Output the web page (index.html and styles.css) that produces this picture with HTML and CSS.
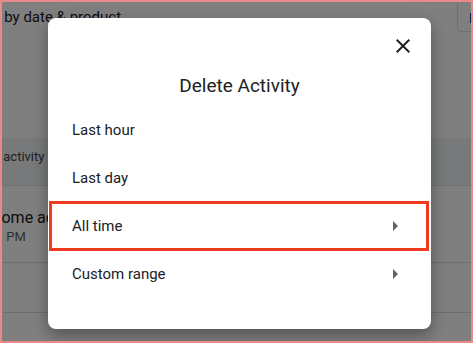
FILE: index.html
```html
<!DOCTYPE html>
<html lang="en">
<head>
  <meta charset="UTF-8">
  <meta name="viewport" content="width=device-width, initial-scale=1.0">
  <title>Delete Activity</title>
  <link rel="stylesheet" href="styles.css">
</head>
<body>
  <div class="frame">
    <!-- Page behind the dialog -->
    <div class="page">
      <div class="toolbar">
        <div class="filter-text">Filter by date &amp; product</div>
        <div class="toolbar-button"><span class="toolbar-mark"></span></div>
      </div>
      <div class="section-band">
        <div class="section-title">Google activity</div>
      </div>
      <div class="activity-row">
        <div class="activity-name">Chrome activity</div>
        <div class="activity-time">1:21 PM</div>
      </div>
      <div class="activity-row small"></div>
      <div class="activity-row small"></div>
    </div>

    <div class="scrim">
      <div class="dialog">
        <div class="dialog-header">
          <button class="close-button" aria-label="Close">
            <svg width="24" height="24" viewBox="0 0 24 24" fill="currentColor">
              <path d="M19 6.41L17.59 5 12 10.59 6.41 5 5 6.41 10.59 12 5 17.59 6.41 19 12 13.41 17.59 19 19 17.59 13.41 12z"></path>
            </svg>
          </button>
          <div class="dialog-title">Delete Activity</div>
        </div>
        <div class="option">Last hour</div>
        <div class="option">Last day</div>
        <div class="option has-arrow highlighted">
          <span>All time</span>
          <svg class="arrow" width="24" height="24" viewBox="0 0 24 24" fill="currentColor"><path d="M10 17l5-5-5-5v10z"></path></svg>
        </div>
        <div class="option has-arrow">
          <span>Custom range</span>
          <svg class="arrow" width="24" height="24" viewBox="0 0 24 24" fill="currentColor"><path d="M10 17l5-5-5-5v10z"></path></svg>
        </div>
      </div>
    </div>
  </div>
</body>
</html>
```

FILE: styles.css
```css
body, html {
  margin: 0;
  padding: 0;
  height: 100%;
  font-family: Roboto, "Liberation Sans", Arial, sans-serif;
}
.frame {
  position: relative;
  box-sizing: border-box;
  width: 473px;
  height: 343px;
  border: 2px solid #e98a8a;
  overflow: hidden;
  background-color: #fff;
}
.page {
  color: #202124;
}
.toolbar {
  height: 34px;
  display: flex;
  justify-content: space-between;
  align-items: flex-start;
}
.filter-text {
  font-size: 15px;
  line-height: 20px;
  margin-top: 5px;
  margin-left: -35px;
  white-space: nowrap;
}
.toolbar-button {
  width: 20px;
  height: 32px;
  margin-top: -2px;
  border: 1px solid #dadce0;
  border-radius: 4px;
  margin-right: -6px;
  box-sizing: border-box;
  padding-top: 12px;
}
.toolbar-mark {
  display: block;
  width: 3px;
  height: 10px;
  margin-left: 12px;
  background-color: #1a3a9c;
}
.section-band {
  margin-top: 102px;
  height: 48px;
  background-color: #f1f3f4;
  border-bottom: 1px solid #e2e3e5;
  box-sizing: border-box;
}
.section-title {
  font-size: 13px;
  line-height: 18px;
  padding-top: 10px;
  margin-left: -43px;
  white-space: nowrap;
  color: #3c4043;
}
.activity-row {
  height: 77px;
  border-bottom: 1px solid #dadce0;
  box-sizing: border-box;
  padding-top: 22px;
}
.activity-row.small {
  height: 50px;
  padding-top: 0;
}
.activity-name {
  font-size: 16px;
  line-height: 20px;
  margin-left: -25px;
  white-space: nowrap;
}
.activity-time {
  font-size: 13px;
  line-height: 18px;
  margin-left: -24px;
  white-space: nowrap;
  color: #5f6368;
}
.scrim {
  position: absolute;
  inset: 0;
  background-color: rgba(0, 0, 0, 0.5);
  padding: 16px 0 0 46px;
}
.dialog {
  width: 383px;
  height: 311px;
  background-color: #fff;
  border-radius: 8px;
  box-shadow: 0 6px 16px rgba(0, 0, 0, 0.35);
  box-sizing: border-box;
}
.dialog-header {
  position: relative;
  height: 88px;
  padding-top: 56px;
  box-sizing: border-box;
}
.close-button {
  position: absolute;
  top: 16px;
  right: 16px;
  width: 24px;
  height: 24px;
  padding: 0;
  border: none;
  background: none;
  color: #202124;
  cursor: pointer;
}
.close-button svg {
  display: block;
}
.dialog-title {
  text-align: center;
  font-size: 19px;
  line-height: 24px;
  color: #202124;
}
.option {
  position: relative;
  height: 48px;
  display: flex;
  align-items: center;
  justify-content: space-between;
  padding: 0 24px 0 24px;
  font-size: 15px;
  color: #202124;
}
.arrow {
  color: #5f6368;
}
.highlighted::after {
  content: "";
  position: absolute;
  top: -1px;
  bottom: -1px;
  left: 1px;
  right: 2px;
  border: 3px solid #ee3a1d;
}
```
